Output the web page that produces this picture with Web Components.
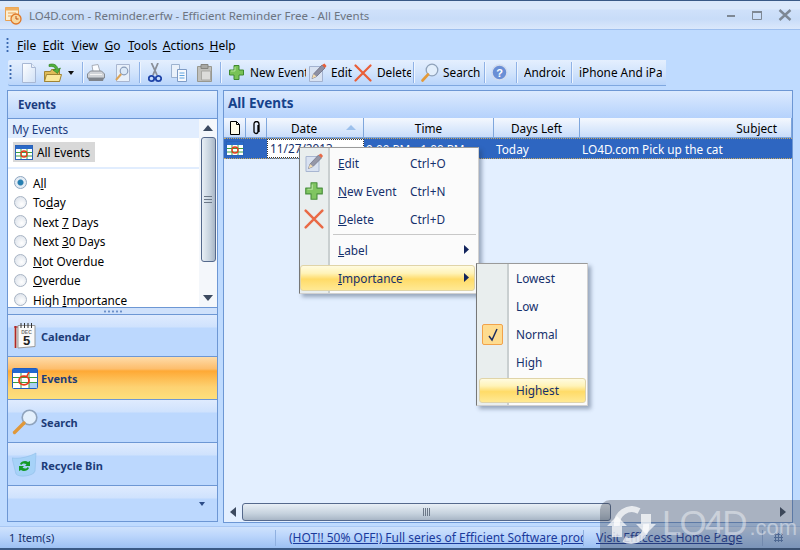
<!DOCTYPE html>
<html><head><meta charset="utf-8"><title>Efficient Reminder</title>
<style>
html,body{margin:0;padding:0;background:#bfdbff;overflow:hidden}
body{font:12px "Noto Sans","DejaVu Sans",sans-serif;color:#000}
</style></head><body>
<x-app>
  <x-titlebar slot="title">LO4D.com - Reminder.erfw - Efficient Reminder Free - All Events</x-titlebar>
  <x-menubar slot="menu"></x-menubar>
  <x-toolbar slot="tools"></x-toolbar>
  <x-sidebar slot="side"></x-sidebar>
  <x-grid slot="main"></x-grid>
  <x-statusbar slot="status"></x-statusbar>
  <x-watermark slot="over"></x-watermark>
  <x-popup slot="over" style="left:299px;top:147px;width:180px;height:147px" gutter="30">
    <x-mi top="1" icon="edit" short="Ctrl+O"><u>E</u>dit</x-mi>
    <x-mi top="29" icon="plus" short="Ctrl+N"><u>N</u>ew Event</x-mi>
    <x-mi top="57" icon="x" short="Ctrl+D"><u>D</u>elete</x-mi>
    <x-mi top="86" sep></x-mi>
    <x-mi top="88" arrow><u>L</u>abel</x-mi>
    <x-mi top="116" arrow hot><u>I</u>mportance</x-mi>
  </x-popup>
  <x-popup slot="over" style="left:476px;top:263px;width:112px;height:143px" gutter="32">
    <x-mi top="0" sub>Lowest</x-mi>
    <x-mi top="28" sub>Low</x-mi>
    <x-mi top="56" sub check>Normal</x-mi>
    <x-mi top="84" sub>High</x-mi>
    <x-mi top="112" sub hot>Highest</x-mi>
  </x-popup>
</x-app>
<script>
const ICONS={
doc:`<svg width="18" height="20" viewBox="0 0 18 20"><defs><linearGradient id="dg" x1="0" x2="1" y1="0" y2="1"><stop offset="0" stop-color="#fff"/><stop offset="1" stop-color="#cfe0f6"/></linearGradient></defs><path d="M2.500 .5h9l4 4v15h-13z" fill="url(#dg)" stroke="#a8b8d4"/><path d="M11.500 .5v4h4" fill="#e8eff9" stroke="#a8b8d4"/></svg>`,
folder:`<svg width="20" height="20" viewBox="0 0 20 20"><path d="M1.500 8.500h6l1-2h8v12h-15z" fill="#e0bc58" stroke="#a08434"/><path d="M1.500 18.500l2-7h15l-2 7z" fill="#fae89c" stroke="#a08434"/><path d="M6 1.500c5-1.500 8 .5 9 4.500l2.500-1-3 5.500-4.500-3.500 2.500-.5C12 4 10 3 6 3.500z" fill="#52b03c" stroke="#2d7a20" stroke-width=".6"/></svg>`,
print:`<svg width="20" height="20" viewBox="0 0 20 20"><path d="M6 2.500l6-1 2 7H7z" fill="#fafcff" stroke="#a8aeb8"/><path d="M1.500 11l3-3h11l3 3v4h-17z" fill="#d0d3d8" stroke="#858a92"/><path d="M2 15h16l-1 3H3z" fill="#7f848c"/><path d="M4 11.500h12" stroke="#f4f4f4"/></svg>`,
preview:`<svg width="18" height="20" viewBox="0 0 18 20"><path d="M2.500 1.500h13v17h-13z" fill="#e8f0fa" stroke="#a9b6d0"/><circle cx="10" cy="8" r="3.800" fill="#dbe9f8" stroke="#8a9cb8" stroke-width="1.200"/><path d="M7.200 11L2 17" stroke="#dca458" stroke-width="2"/></svg>`,
cut:`<svg width="14" height="20" viewBox="0 0 14 20"><path d="M3.500 0l5.500 12M10 0L5 12" stroke="#8a8f98" stroke-width="1.800"/><circle cx="3.500" cy="15.500" r="2.700" fill="none" stroke="#1f44a8" stroke-width="1.800"/><circle cx="10.500" cy="15.500" r="2.700" fill="none" stroke="#1f44a8" stroke-width="1.800"/></svg>`,
copy:`<svg width="18" height="20" viewBox="0 0 18 20"><path d="M1.500 1.500h8v13h-8z" fill="#eaf1fa" stroke="#9db2cf"/><path d="M7.500 6.500h9v12h-9z" fill="#f6f9fd" stroke="#7f9cc6"/><path d="M9.500 10h5M9.500 12.500h5M9.500 15h5" stroke="#5fa4e0"/></svg>`,
paste:`<svg width="17" height="20" viewBox="0 0 17 20"><path d="M1.500 3.500h14v15h-14z" fill="#c0c0bc" stroke="#98988f"/><path d="M5 1.500h7v4H5z" fill="#a8a8a4" stroke="#858580"/><path d="M5.500 8h9v9h-9z" fill="#dcdcda" stroke="#a8a8a4"/></svg>`,
plus:`<svg width="17" height="17" viewBox="0 0 17 17"><path d="M6 1.500h5v4.500h4.500v5H11v4.500H6V11H1.500V6H6z" fill="#78c256" stroke="#3f8a30" stroke-linejoin="round"/><path d="M7 3v4H3" fill="none" stroke="#b4e49a"/></svg>`,
edit:`<svg width="19" height="20" viewBox="0 0 19 20"><path d="M1.500 3.500h13v15h-13z" fill="#d8e2f2" stroke="#a3b2cf"/><path d="M4 15.500l1.500-4.500 8.500-9 3 3-8.500 8.500z" fill="#8e90a2" stroke="#63647a" stroke-width=".7"/><path d="M14 2l3 3 1.500-2L16.500.5z" fill="#e85f38"/><path d="M4 15.500l1.500-4.500 3 2.500z" fill="#f4dcae"/></svg>`,
x:`<svg width="18" height="18" viewBox="0 0 18 18"><path d="M1.500 1.500l15 15M16.500 1.500l-15 15" stroke="#e95f38" stroke-width="2.200" stroke-linecap="round"/></svg>`,
mag:`<svg width="18" height="20" viewBox="0 0 18 20"><circle cx="11" cy="7" r="5.800" fill="#e2eefb" stroke="#8fa2ba" stroke-width="1.300"/><path d="M7 11.500l-5.500 6" stroke="#e39a3a" stroke-width="2.600" stroke-linecap="round"/></svg>`,
help:`<svg width="17" height="17" viewBox="0 0 17 17"><circle cx="8.500" cy="8.500" r="7.500" fill="#6a8fd6" stroke="#d2dcee" stroke-width="1.500"/><text x="8.500" y="12.500" text-anchor="middle" font-family="Liberation Sans" font-weight="700" font-size="11" fill="#fff">?</text></svg>`,
table:`<svg width="26" height="21" viewBox="0 0 26 21"><rect x=".5" y=".5" width="25" height="20" rx="1" fill="#fff" stroke="#1f5cc0"/><rect x="1" y="1" width="24" height="4" fill="#2268d0"/><rect x="17" y="15" width="8" height="5" fill="#a8d0f4"/><path d="M1 9.500h24M1 14.500h24M9 5v15M17 5v15" stroke="#3ca040"/><ellipse cx="12" cy="12.500" rx="5" ry="4.300" fill="none" stroke="#e83818" stroke-width="1.800"/><path d="M17 4l-2.500 5" stroke="#e83818" stroke-width="1.500"/></svg>`,
tableS:`<svg width="18" height="15" viewBox="0 0 18 15"><rect x=".5" y=".5" width="17" height="14" fill="#fff" stroke="#2a62b8"/><rect x="1" y="1" width="16" height="3" fill="#2a6ac8"/><path d="M1 7.500h16M1 11h16M6 4v10M12 4v10" stroke="#3ca040"/><circle cx="9" cy="9" r="3" fill="none" stroke="#e83818" stroke-width="1.300"/></svg>`,
cal:`<svg width="23" height="26" viewBox="0 0 23 26"><path d="M1 4.500h4V25H1z" fill="#d8d4d0"/><path d="M2.500 3v22" stroke="#b02828" stroke-width="1.600"/><path d="M1 4h12" stroke="#b02828" stroke-width="1.200"/><path d="M5 2.500h17v21l-17 1.500z" fill="#fafafa" stroke="#9a9a9a"/><path d="M8 0v5M11.500 0v5M15 0v5M18.500 0v5" stroke="#333"/><text x="13.500" y="11" text-anchor="middle" font-family="Liberation Sans" font-size="5" fill="#777">DEC</text><text x="13.500" y="22" text-anchor="middle" font-family="Liberation Sans" font-size="13" fill="#222">5</text></svg>`,
magL:`<svg width="26" height="26" viewBox="0 0 26 26"><circle cx="17.500" cy="8.500" r="7.300" fill="#e4f0fc" stroke="#8fa3bc" stroke-width="1.600"/><path d="M12 14L2.500 23.500" stroke="#e0983a" stroke-width="3.400" stroke-linecap="round"/></svg>`,
bin:`<svg width="25" height="26" viewBox="0 0 25 26"><path d="M0 6c7 1 17-1 24-5l-1 18c-1 5-16 7-19 3z" fill="#a6d2f8" stroke="#90bde8" stroke-width=".6"/><path d="M8 12c1-3 6-4 8-2l2-1v5h-5l1.500-1.500C13 11 10 11 9.500 13zM17 16c-1 3-6 4-8 2l-2 1v-5h5l-1.500 1.500C12 17 15 17 15.500 15z" fill="#129a28"/></svg>`,
chk:`<svg width="12" height="14" viewBox="0 0 12 14"><path d="M2 8l3 4 5-11" fill="none" stroke="#1c2c60" stroke-width="1.500"/></svg>`,
clock:`<svg width="18" height="20" viewBox="0 0 18 20"><path d="M1.500 2.500h13v13h-13z" fill="#fbeed0" stroke="#e8a050"/><path d="M1.500 2.500h13v3h-13z" fill="#f0b060"/><path d="M4 8h8M4 11h5" stroke="#e8a050"/><circle cx="12" cy="14" r="5" fill="#f8d8a0" stroke="#e07828" stroke-width="1.300"/><path d="M12 11v3h2.500" stroke="#c05010" fill="none"/></svg>`,
sheet:`<svg width="12" height="14" viewBox="0 0 12 14"><path d="M1.500.5h6l3 3v10h-9z" fill="#fffbe8" stroke="#000"/><path d="M7.500.5v3h3" fill="none" stroke="#000"/></svg>`,
clip:`<svg width="9" height="14" viewBox="0 0 9 14"><path d="M6.500 4v6.500a2 2 0 0 1-4 0V3a2.500 2.500 0 0 1 5 0v8" fill="none" stroke="#000" stroke-width="1.300" transform="translate(-.5 0)"/></svg>`
};
function def(name,css,html,init){
  customElements.define(name,class extends HTMLElement{
    connectedCallback(){
      if(this.shadowRoot)return;
      const r=this.attachShadow({mode:"open"});
      r.innerHTML=`<style>${css}</style>`+(typeof html==="function"?html(this):html);
      if(init)init(this,r);
    }
  });
}
const FONT=`font:11.8px/16px "Noto Sans","DejaVu Sans",sans-serif;`;
def("x-app",`
:host{display:block;width:800px;height:550px;position:relative;overflow:hidden;background:#bfdbff;${FONT}}
.frame{display:flex;flex-direction:column;height:100%}
.body{flex:1;display:flex;gap:5px;padding:4px 7px 3px;min-height:0}
`,`<div class="frame"><slot name="title"></slot><slot name="menu"></slot><slot name="tools"></slot>
<div class="body"><slot name="side"></slot><slot name="main"></slot></div><slot name="status"></slot></div><slot name="over"></slot>`);

def("x-titlebar",`
:host{display:flex;align-items:center;height:30px;box-sizing:border-box;border-top:1px solid #3a5a86;border-bottom:1px solid #9ebfee;
background:linear-gradient(#dbe9fb 0,#dbe9fb 8px,#cfe1fa 9px,#c8dcf8 18px,#dce9fc 29px);color:#6c7480;font-size:11.500px;padding-left:4px}
.ic{width:25px;display:flex}
.t{flex:1;white-space:nowrap;padding-top:1px}
.b{display:flex;gap:14px;padding-right:8px;align-items:center}
.b svg{display:block}
`,()=>`<span class="ic">${ICONS.clock}</span><span class="t"><slot></slot></span>
<span class="b"><svg width="12" height="12"><path d="M3 7h8" stroke="#7e8894" stroke-width="2"/></svg>
<svg width="14" height="12"><path d="M2.500 2.500h9v8h-9z" fill="none" stroke="#7e8894"/><path d="M2 2h10v2H2z" fill="#7e8894"/></svg>
<svg width="14" height="12" viewBox="0 0 14 12"><path d="M1.500 1l11 10M12.500 1l-11 10" stroke="#7e8894" stroke-width="2.400"/></svg></span>`);

def("x-menubar",`
:host{display:flex;align-items:center;height:30px;box-sizing:border-box;padding:1px 0 0 6px;color:#000;font-size:12px}
.g{width:3px;height:17px;background:radial-gradient(circle,#3a68b0 1px,transparent 1.200px) 0 0/3px 4px;margin-right:8px}
span{margin-right:5.500px}
`,`<i class="g"></i><span style="margin-right:6.500px"><u>F</u>ile</span><span style="margin-right:7.500px"><u>E</u>dit</span><span style="margin-right:4.500px"><u>V</u>iew</span><span style="margin-left:2px"><u>G</u>o</span><span style="margin-left:2px"><u>T</u>ools</span><span><u>A</u>ctions</span><span><u>H</u>elp</span>`);

def("x-toolbar",`
:host{display:flex;align-items:center;width:658px;height:26px;box-sizing:border-box;margin-left:8px;
background:linear-gradient(#e4effe,#d2e4fc 50%,#b9d5fb);border-bottom:1px solid #7fa8e0;border-radius:2px 0 0 2px;white-space:nowrap}
.grip{width:3px;height:17px;margin-left:1px;background:radial-gradient(circle,#3a68b0 1px,transparent 1.200px) 0 0/3px 4px}
.i{display:flex;align-items:center;flex:none;height:22px;overflow:hidden}
.s{flex:none;width:1px;height:21px;background:#eef5ff;border-left:1px solid #8fb2e6}
svg{display:block;flex:none}
.l{overflow:hidden;display:block;margin-top:-2px}
`,()=>{
 const it=(ml,w,c)=>`<div class="i" style="margin-left:${ml}px;width:${w}px">${c}</div>`;
 const sep=(ml)=>`<div class="s" style="margin-left:${ml}px"></div>`;
 const lab=(ml,w,t)=>`<span class="l" style="margin-left:${ml}px;width:${w}px">${t}</span>`;
 return `<i class="grip"></i>`+
 it(8,18,ICONS.doc)+it(5,20,ICONS.folder)+
 `<svg style="margin-left:5px" width="6" height="4"><path d="M0 0h6L3 4z" fill="#111"/></svg>`+
 sep(8)+it(2,20,ICONS.print)+it(8,18,ICONS.preview)+sep(7)+it(7,14,ICONS.cut)+it(8,18,ICONS.copy)+it(8,17,ICONS.paste)+sep(7)+
 it(6,17,ICONS.plus)+lab(5,56,"New Event")+it(2,19,ICONS.edit)+lab(4,22,"Edit")+it(1,18,ICONS.x)+lab(5,34,"Delete")+sep(2)+
 it(6,18,ICONS.mag)+lab(4,37,"Search")+sep(4)+it(5,17,ICONS.help)+sep(8)+lab(6,41,"Android")+sep(6)+lab(6,83,"iPhone And iPad");
});

def("x-radio",`
:host{display:flex;align-items:center;height:19.500px;padding-left:6px;gap:6px;white-space:nowrap}
i{width:13px;height:13px;border-radius:50%;flex:none;box-sizing:border-box;border:1px solid #a8b4c4;background:radial-gradient(circle at 60% 65%,#fff,#d5dce6)}
:host([on]) i{background:radial-gradient(circle,#1f7fb4 0,#2a7fb0 2.500px,#e4ecf4 3.500px);border-color:#8ea6c0}
`,`<i></i><span><slot></slot></span>`);

def("x-navbtn",`
:host{display:flex;align-items:center;height:43px;box-sizing:border-box;border-bottom:1px solid #6d97d4;
background:linear-gradient(#dfebfe 0,#cfe2fd 12px,#bcd8fe 13px,#bcd8fe 100%);color:#1c3c78;font-weight:700;font-size:11px}
:host([hot]){background:linear-gradient(#fedcaa 0,#fdbd6b 12px,#fea935 14px,#fdd272 30px,#fde07c 100%)}
.ic{width:33px;display:flex;justify-content:center;flex:none;align-items:center;padding-top:1px}
.l{padding-top:var(--pt,2px)}
`,e=>`<span class="ic">${ICONS[e.getAttribute("icon")]||""}</span><span class="l"><slot></slot></span>`);

def("x-sidebar",`
:host{display:flex;flex-direction:column;width:211px;box-sizing:border-box;border:1px solid #6d97d4;background:#fff;flex:none;margin-bottom:1px}
.hd{height:28px;flex:none;display:flex;align-items:center;padding-left:10px;color:#1c3c80;font-weight:700;font-size:11.500px;box-sizing:border-box;
background:linear-gradient(#e2eefe,#bad6fd);border-bottom:1px solid #6d97d4}
.box{height:188px;flex:none;display:flex;min-height:0;background:#fff;overflow:hidden}
.c{flex:1;overflow:hidden;min-width:0}
.my{height:19px;background:#e1edfe;display:flex;align-items:center;padding-left:4px;color:#1c3c80}
.ae{padding:4px 5px 5px;border-bottom:2px solid #e1edfe;height:20px;margin-bottom:4px}
.sel{display:inline-flex;align-items:center;background:#d8d8d8;height:20px;padding:0 5px 0 2px;gap:4px}
.sb{width:18px;flex:none;display:flex;flex-direction:column;background:#f4f7fb;align-items:center}
.ar{height:18px;display:flex;align-items:center;justify-content:center;flex:none}
.th{width:15px;height:125px;flex:none;border:1px solid #55698c;border-radius:3px;box-sizing:border-box;background:linear-gradient(90deg,#e8eff6,#c6d2de 60%,#a8b6c6);display:flex;align-items:center;justify-content:center}
.sp{flex:1}
.split{height:8px;flex:none;background:#cfe1fb;border-top:1px solid #6d97d4;border-bottom:1px solid #6d97d4;display:flex;justify-content:center;align-items:center;box-sizing:border-box}
.dots{width:20px;height:3px;background:radial-gradient(circle,#6c90c8 1px,transparent 1.200px) 0 0/4px 3px}
.tail{flex:1;background:linear-gradient(#dfebfe 0,#cfe2fd 12px,#bcd8fe 13px);display:flex;justify-content:flex-end;align-items:center;padding:0 12px 0 0}
`,()=>`<div class="hd">Events</div>
<div class="box"><div class="c"><div class="my">My Events</div>
<div class="ae"><span class="sel">${ICONS.tableS}All Events</span></div>
<x-radio on>A<u>l</u>l</x-radio><x-radio>To<u>d</u>ay</x-radio><x-radio>Next <u>7</u> Days</x-radio><x-radio>Next <u>3</u>0 Days</x-radio><x-radio><u>N</u>ot Overdue</x-radio><x-radio><u>O</u>verdue</x-radio><x-radio>High <u>I</u>mportance</x-radio>
</div><div class="sb"><div class="ar"><svg width="10" height="6"><path d="M5 0l5 6H0z" fill="#3c4a60"/></svg></div>
<div class="th"><svg width="8" height="7"><path d="M0 .5h8M0 3.500h8M0 6.500h8" stroke="#6c7888"/></svg></div><div class="sp"></div>
<div class="ar"><svg width="10" height="6"><path d="M5 6L0 0h10z" fill="#3c4a60"/></svg></div></div></div>
<div class="split"><i class="dots"></i></div>
<x-navbtn icon="cal" style="height:42px">Calendar</x-navbtn><x-navbtn icon="table" hot>Events</x-navbtn><x-navbtn icon="magL" style="--pt:4px">Search</x-navbtn><x-navbtn icon="bin" style="--pt:4px">Recycle Bin</x-navbtn>
<div class="tail"><svg width="6" height="4"><path d="M0 0h6L3 4z" fill="#2c4c88"/></svg></div>`);

def("x-grid",`
:host{flex:1;display:flex;flex-direction:column;background:#e3efff;border:1px solid #6d97d4;box-sizing:border-box;min-width:0}
.hd{height:27px;flex:none;box-sizing:border-box;background:linear-gradient(#dceafe,#b5d2fc);display:flex;align-items:center;padding:0 0 3px 4px;color:#15428b;font-weight:700;font-size:13.500px}
.cols{display:grid;grid-template-columns:22px 21px 97px 130px 86px 1fr;height:20px;flex:none}
.cols>div{box-sizing:border-box;border-right:1px solid #7ea6dc;border-bottom:1px solid #7ea6dc;background:linear-gradient(#f4f8fe,#dae8fc 60%,#c8dcfa);display:flex;align-items:center;justify-content:center;position:relative;padding-top:1px}
.row{display:grid;grid-template-columns:22px 21px 97px 130px 86px 1fr;height:21px;flex:none;background:#2e66c1;color:#fff;border-top:1px dotted #c9a860;border-bottom:1px dotted #c9a860;box-sizing:border-box;align-items:center}
.row>div{padding-left:2px;white-space:nowrap;overflow:hidden;padding-top:1px}
.row .d{background:#fff;color:#15306c;height:19px;border:1px dotted #333;box-sizing:border-box;line-height:17px;padding:0 0 0 2px}
.ic{display:flex;justify-content:center;padding:0!important}
.sort{position:absolute;right:7px;top:7px}
.fill{flex:1}
.sb{height:18px;flex:none;display:flex;align-items:center;margin:0 0 1px}
.ar{width:18px;flex:none;display:flex;justify-content:center}
.tr{flex:1;height:18px}
.th{width:369px;height:18px;box-sizing:border-box;border:1px solid #55698c;border-radius:3px;background:linear-gradient(#e8eff6,#c6d2de 60%,#a8b6c6);display:flex;align-items:center;justify-content:center}
`,()=>`<div class="hd">All Events</div>
<div class="cols"><div>${ICONS.sheet}</div><div>${ICONS.clip}</div><div style="padding-right:22px">Date<svg class="sort" width="10" height="5"><path d="M5 0l5 5H0z" fill="#9cc0ec"/></svg></div><div>Time</div><div>Days Left</div><div style="justify-content:flex-end;padding-right:14px">Subject</div></div>
<div class="row"><div class="ic">${ICONS.tableS}</div><div></div><div class="d">11/27/2013</div><div>9:00 PM - 1:00 PM</div><div>Today</div><div>LO4D.com Pick up the cat</div></div>
<div class="fill"></div>
<div class="sb"><div class="ar"><svg width="6" height="10"><path d="M0 5l6-5v10z" fill="#3c4a60"/></svg></div>
<div class="tr"><div class="th"><svg width="8" height="8"><path d="M.5 0v8M2.500 0v8M4.500 0v8M6.500 0v8" stroke="#6c7888"/></svg></div></div>
<div class="ar"><svg width="6" height="10"><path d="M6 5L0 0v10z" fill="#3c4a60"/></svg></div></div>`);

def("x-statusbar",`
:host{display:flex;align-items:center;height:24px;box-sizing:border-box;border-top:1px solid #a9c8f4;border-bottom:2px solid #3a5a86;
background:linear-gradient(#cfe2fc,#bdd7fc 8px,#9dc1f3 100%);white-space:nowrap;color:#15306c}
.a{width:275px;padding-left:9px;box-sizing:border-box;flex:none;font-size:11px}
.s{width:1px;height:16px;background:#8fb0e0;flex:none}
.b{width:294px;margin-left:13px;overflow:hidden;color:#1a3a9c;text-decoration:underline;flex:none;font-size:12px}
.c{margin-left:12px;color:#1a3a9c;text-decoration:underline;width:166px;flex:none;font-size:12.300px}
.gr{width:9px;height:9px;margin-left:11px;flex:none;background:radial-gradient(circle,#5a7fb8 1px,transparent 1.200px) 0 0/3px 3px}
`,`<div class="a">1 Item(s)</div><i class="s"></i><div class="b">(HOT!! 50% OFF!) Full series of Efficient Software products</div><i class="s"></i><div class="c">Visit Efficcess Home Page</div><i class="s"></i><i class="gr"></i>`);

def("x-popup",`
:host{position:absolute;display:block;box-sizing:border-box;background:#fbfbfb;border:1px solid;border-color:#9a9a9a #d0d0d0 #d0d0d0 #777;box-shadow:3px 3px 4px rgba(40,60,90,.4);color:#15306c}
.g{position:absolute;left:0;top:0;bottom:0;box-sizing:border-box;background:#e9eeee;border-right:2px solid #c9cfd0}
`,e=>`<div class="g" style="width:${e.getAttribute("gutter")}px"></div><slot></slot>`);

def("x-mi",`
:host{position:absolute;display:block;left:0;right:0;height:28px}
:host([sep]){height:1px;left:33px;right:2px;background:#c8c8c8}
.r{position:relative;display:flex;align-items:center;height:28px;padding-left:38px;white-space:nowrap}
:host([sub]) .r{padding-left:39px}
.ic{position:absolute;left:3px;top:4px;width:22px;height:20px;display:flex;align-items:center;justify-content:center}
.ic svg{width:20px;height:20px;opacity:.92}
.k{position:absolute;left:110px}
.ar{position:absolute;right:9px;top:9px}
.hl{display:none}
:host([hot]) .hl{display:block;position:absolute;left:0;right:3px;top:1px;height:26px;box-sizing:border-box;border:1px solid #e0d4a8;border-radius:3px;background:linear-gradient(#fffbe0,#fff3b8 30%,#ffdb68 55%,#ffe994)}
:host([hot][sub]) .hl{left:2px;right:1px;top:2px;height:25px}
.tx{position:relative}
.chk{position:absolute;left:5px;top:4px;width:21px;height:21px;box-sizing:border-box;border:1px solid #f2a24a;border-radius:2px;background:#fedc90;display:flex;align-items:center;justify-content:center}
`,e=>e.hasAttribute("sep")?"":`<div class="r"><i class="hl"></i>${e.getAttribute("icon")?`<span class="ic">${ICONS[e.getAttribute("icon")]}</span>`:""}${e.hasAttribute("check")?`<span class="chk">${ICONS.chk}</span>`:""}<span class="tx"><slot></slot></span>${e.getAttribute("short")?`<span class="k">${e.getAttribute("short")}</span>`:""}${e.hasAttribute("arrow")?`<svg class="ar" width="5" height="9"><path d="M0 0l5 4.500L0 9z" fill="#12245c"/></svg>`:""}</div>`,
 e=>{e.style.top=e.getAttribute("top")+"px"});

def("x-watermark",`
:host{position:absolute;left:600px;top:500px;width:200px;height:50px;background:rgba(60,65,78,.35);border-radius:10px 0 0 0;display:flex;align-items:center;pointer-events:none;overflow:hidden}
svg{margin-left:7px;flex:none}
span{font:35px/46px "Liberation Sans",sans-serif;color:rgba(255,255,255,.42);letter-spacing:-2px;margin-left:6px;white-space:nowrap}
small{font-size:22px;letter-spacing:0;margin-left:4px}
`,`<svg width="49" height="38" viewBox="0 0 49 38"><path d="M10 20a15 15 0 0 1 22-15" fill="none" stroke="#fff" stroke-opacity=".72" stroke-width="6"/><path d="M39 18a15 15 0 0 1-22 15" fill="none" stroke="#fff" stroke-opacity=".72" stroke-width="6"/><path d="M0 20l10-10 10 10h-5v11H5V20z" fill="#fff" fill-opacity=".72"/><path d="M49 18L39 28 29 18h5V8h10v10z" fill="#fff" fill-opacity=".72"/></svg><span>LO4D<small>.com</small></span>`);
</script>
</body></html>
